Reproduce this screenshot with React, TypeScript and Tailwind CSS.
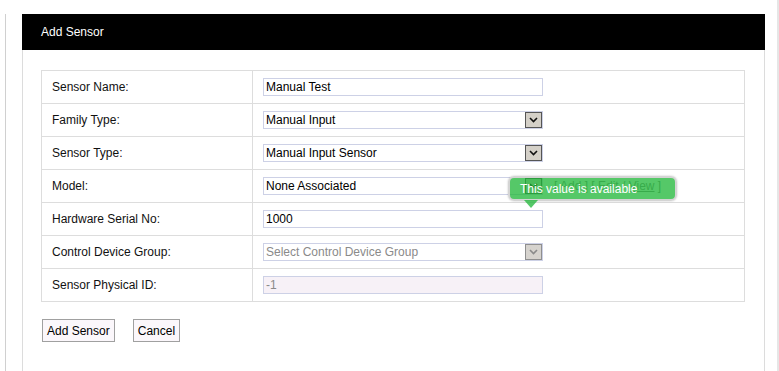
import React from 'react';

function Chevron({ disabled }: { disabled?: boolean }) {
  return (
    <span
      className={`absolute right-0 top-0 flex h-[16px] w-[17px] items-center justify-center border ${
        disabled ? 'border-[#8f8f8f] bg-[#d6d3ce]' : 'border-[#555] bg-[#d4d0c8]'
      }`}
    >
      <svg width="9" height="6" viewBox="0 0 9 6">
        <path
          d="M1 1 L4.5 4.5 L8 1"
          fill="none"
          stroke={disabled ? '#8a8a8a' : '#111'}
          strokeWidth="1.6"
        />
      </svg>
    </span>
  );
}

function Field({
  value,
  select,
  disabled,
  readOnly,
}: {
  value: string;
  select?: boolean;
  disabled?: boolean;
  readOnly?: boolean;
}) {
  return (
    <div
      className={`relative h-[18px] w-[280px] border border-[#cdd1e6] ${
        readOnly ? 'bg-[#f7f1f7]' : 'bg-white'
      }`}
    >
      <span
        className={`absolute left-[2px] top-[1px] leading-[14px] ${
          disabled || readOnly ? 'text-[#8a8a8a]' : 'text-black'
        }`}
      >
        {value}
      </span>
      {select && <Chevron disabled={disabled} />}
    </div>
  );
}

const rows: { label: string; value: string; select?: boolean; disabled?: boolean; readOnly?: boolean; model?: boolean }[] = [
  { label: 'Sensor Name:', value: 'Manual Test' },
  { label: 'Family Type:', value: 'Manual Input', select: true },
  { label: 'Sensor Type:', value: 'Manual Input Sensor', select: true },
  { label: 'Model:', value: 'None Associated', select: true, model: true },
  { label: 'Hardware Serial No:', value: '1000' },
  { label: 'Control Device Group:', value: 'Select Control Device Group', select: true, disabled: true },
  { label: 'Sensor Physical ID:', value: '-1', readOnly: true },
];

export default function App() {
  return (
    <div className="relative flex h-[371px] w-[779px] overflow-hidden bg-white pt-[14px] text-[12px] font-['Liberation_Sans',Arial,sans-serif] text-[#111]">
      <div className="ml-[5px] w-px bg-[#d0d0d0]" />
      <div className="ml-[16px] flex w-[743px] flex-col">
        <div className="flex h-[36px] items-center bg-black pl-[19px] text-white">Add Sensor</div>
        <div className="flex-1 border-x border-[#dcdcdc] pl-[18px] pt-[20px]">
          <div className="w-[704px] border border-[#dddddd]">
            {rows.map((r, i) => (
              <div
                key={r.label}
                className={i > 0 ? 'flex h-[33px] border-t border-[#dddddd]' : 'flex h-[32px]'}
              >
                <div className="flex w-[211px] items-center border-r border-[#dddddd] pl-[10px]">{r.label}</div>
                <div className="relative flex flex-1 items-center pl-[10px]">
                  <Field value={r.value} select={r.select} disabled={r.disabled} readOnly={r.readOnly} />
                  {r.model && (
                    <>
                      <span className="ml-[11px] text-[#8a8a8a]">
                        [ Add ] [ Edit / <span className="underline">View</span> ]
                      </span>
                      <div className="absolute left-[255px] top-[6px] flex h-[25px] w-[169px] items-center rounded-[6px] border-2 border-[#d4d4d4] bg-[#1cb535]/75 pl-[10px] text-white shadow-[0_0_2px_rgba(0,0,0,0.25)]">
                        This value is available
                        <span className="absolute left-[14px] top-[22px] h-0 w-0 border-x-[7px] border-t-[8px] border-x-transparent border-t-[#1cb535]/75" />
                      </div>
                    </>
                  )}
                </div>
              </div>
            ))}
          </div>
          <div className="mt-[17px] flex gap-[18px] pl-px">
            <button className="h-[23px] border border-[#a0a0a0] bg-[#fbf7fb] px-[4px] text-black">Add Sensor</button>
            <button className="h-[23px] border border-[#a0a0a0] bg-[#fbf7fb] px-[4px] text-black">Cancel</button>
          </div>
        </div>
      </div>
      <div className="absolute right-0 top-0 h-full w-[2px] bg-[#e6e6e6]" />
    </div>
  );
}
